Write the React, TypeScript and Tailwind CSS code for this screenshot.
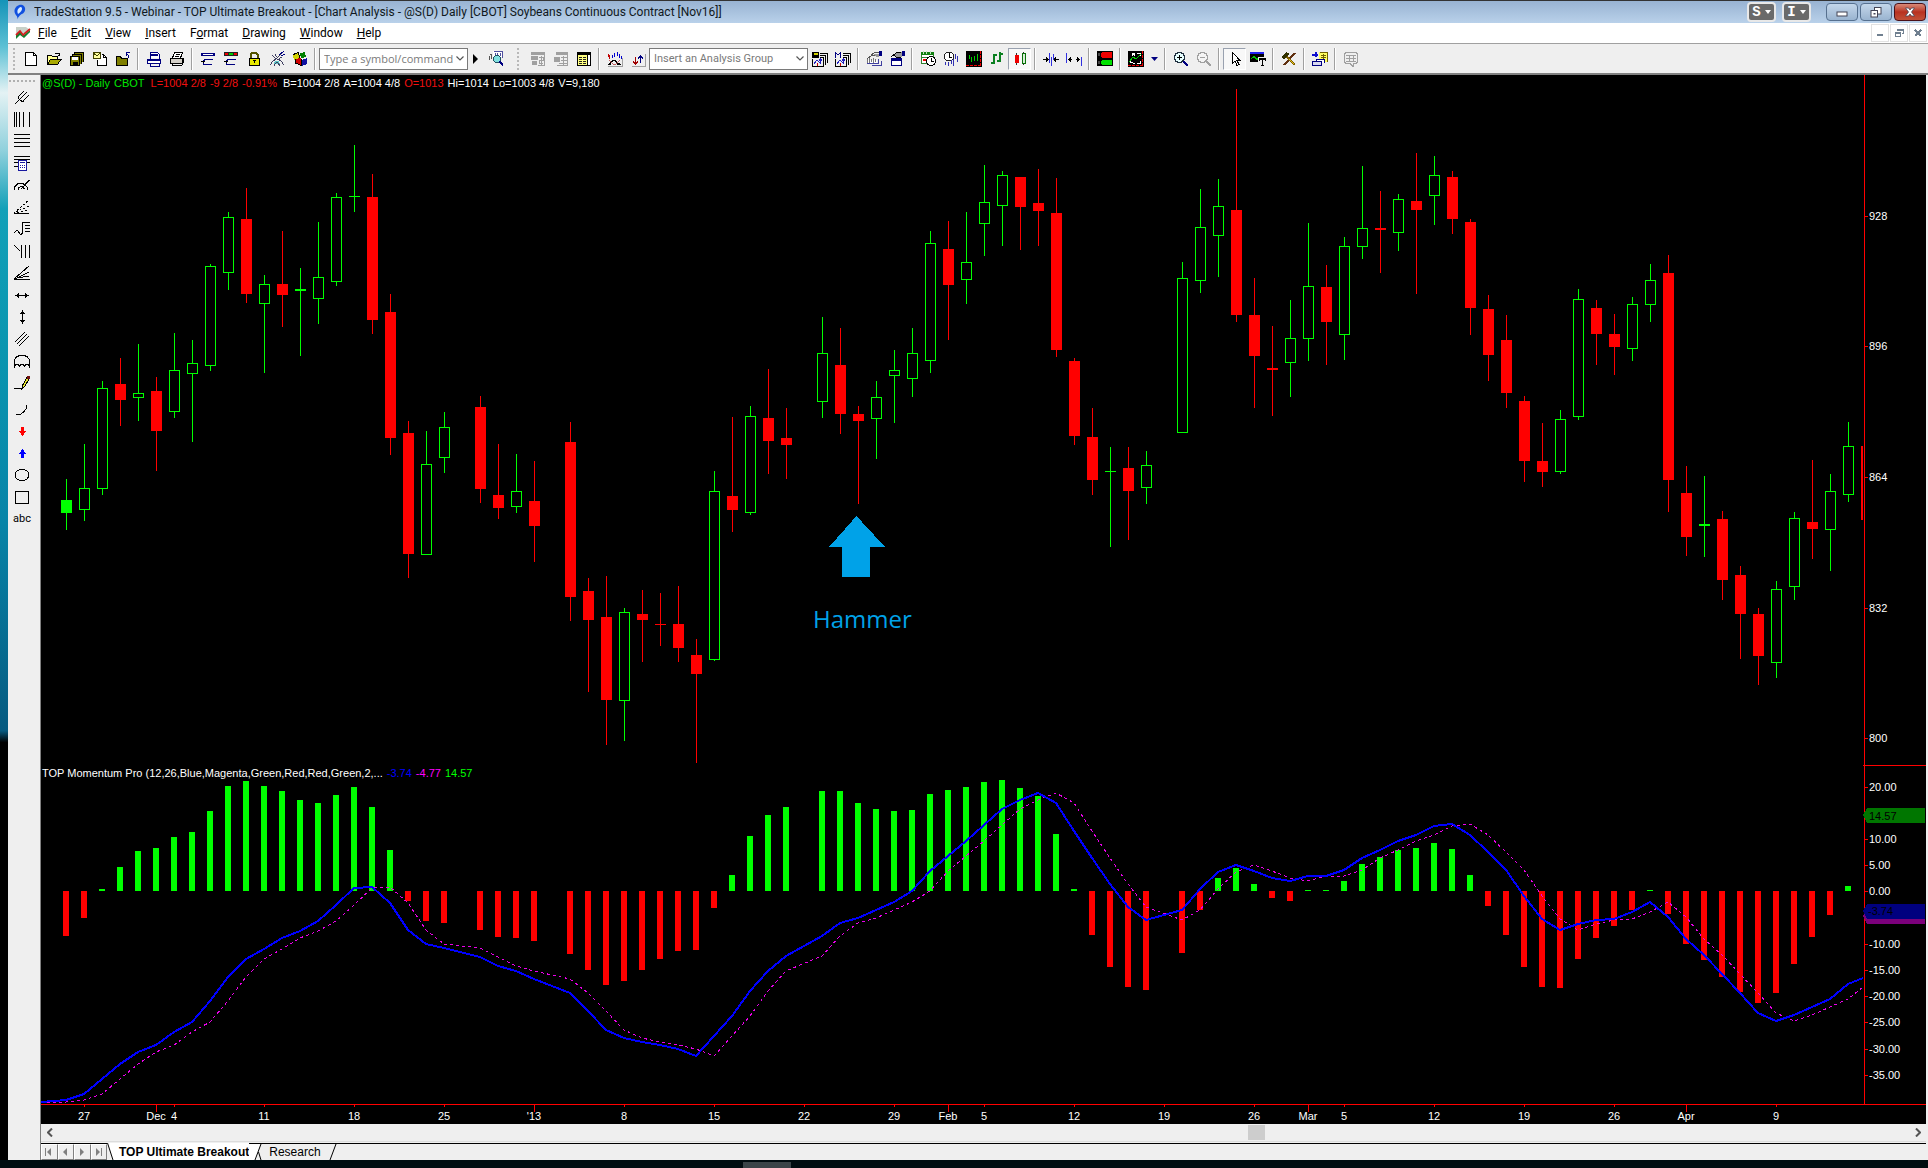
import React from "react";

type Kids = { children: React.ReactNode };

/* ---------- chart data: positions inside the 1885 x 1049 plot ---------- */

type Kind = "up" | "down" | "solid";
// [bar index, high, body top, body bottom, low, kind]
const candles: [number, number, number, number, number, Kind][] = [
  [0, 404, 425, 438, 455, "solid"], [1, 369, 413, 435, 446, "up"], [2, 306, 313, 414, 420, "up"],
  [3, 283, 309, 325, 351, "down"], [4, 269, 318, 323, 346, "up"], [5, 302, 316, 356, 396, "down"],
  [6, 258, 295, 337, 343, "up"], [7, 265, 288, 299, 367, "up"], [8, 189, 191, 291, 296, "up"],
  [9, 137, 142, 198, 215, "up"], [10, 113, 144, 219, 228, "down"], [11, 200, 209, 229, 298, "up"],
  [12, 156, 209, 220, 252, "down"], [13, 193, 214, 216, 281, "solid"], [14, 147, 202, 224, 249, "up"],
  [15, 118, 122, 207, 211, "up"], [16, 70, 121, 122, 137, "solid"], [17, 99, 122, 245, 259, "down"],
  [18, 219, 237, 363, 380, "down"], [19, 346, 358, 479, 503, "down"], [20, 356, 389, 480, 480, "up"],
  [21, 337, 352, 383, 398, "up"], [23, 321, 332, 414, 428, "down"], [24, 369, 420, 433, 444, "down"],
  [25, 379, 416, 432, 438, "up"], [26, 386, 426, 451, 487, "down"], [28, 347, 367, 522, 546, "down"],
  [29, 503, 516, 545, 617, "down"], [30, 501, 542, 625, 670, "down"], [31, 533, 537, 626, 666, "up"],
  [32, 515, 539, 545, 587, "down"], [33, 518, 549, 550, 571, "down"], [34, 511, 549, 573, 587, "down"],
  [35, 564, 580, 599, 688, "down"], [36, 396, 416, 585, 586, "up"], [37, 342, 421, 435, 457, "down"],
  [38, 331, 341, 438, 440, "up"], [39, 294, 343, 366, 399, "down"], [40, 333, 363, 370, 404, "down"],
  [42, 242, 278, 327, 343, "up"], [43, 253, 290, 339, 359, "down"], [44, 331, 339, 346, 429, "down"],
  [45, 306, 322, 344, 384, "up"], [46, 275, 295, 301, 348, "up"], [47, 253, 278, 304, 322, "up"],
  [48, 156, 168, 286, 298, "up"], [49, 146, 174, 210, 265, "down"], [50, 137, 187, 205, 229, "up"],
  [51, 90, 127, 149, 181, "up"], [52, 96, 100, 131, 171, "up"], [53, 102, 102, 132, 175, "down"],
  [54, 94, 128, 136, 171, "down"], [55, 103, 138, 275, 282, "down"], [56, 283, 286, 361, 370, "down"],
  [57, 333, 362, 405, 420, "down"], [58, 372, 396, 397, 472, "solid"], [59, 372, 393, 416, 465, "down"],
  [60, 376, 390, 413, 429, "up"], [62, 187, 203, 358, 358, "up"], [63, 114, 152, 206, 218, "up"],
  [64, 104, 131, 161, 202, "up"], [65, 14, 135, 240, 247, "down"], [66, 203, 240, 281, 333, "down"],
  [67, 251, 293, 295, 341, "down"], [68, 225, 263, 288, 322, "up"], [69, 148, 211, 264, 286, "up"],
  [70, 190, 212, 247, 290, "down"], [71, 162, 171, 260, 285, "up"], [72, 91, 153, 172, 184, "up"],
  [73, 116, 153, 155, 198, "down"], [74, 119, 124, 158, 176, "up"], [75, 78, 126, 135, 219, "down"],
  [76, 81, 100, 121, 150, "up"], [77, 96, 102, 144, 159, "down"], [78, 144, 147, 233, 260, "down"],
  [79, 220, 234, 280, 306, "down"], [80, 240, 265, 318, 333, "down"], [81, 321, 326, 386, 407, "down"],
  [82, 348, 386, 397, 412, "down"], [83, 335, 344, 397, 399, "up"], [84, 214, 224, 342, 345, "up"],
  [85, 225, 233, 259, 290, "down"], [86, 239, 259, 272, 300, "down"], [87, 222, 229, 274, 286, "up"],
  [88, 189, 205, 230, 247, "up"], [89, 180, 198, 405, 437, "down"], [90, 391, 418, 462, 481, "down"],
  [91, 401, 449, 451, 482, "solid"], [92, 436, 444, 505, 525, "down"], [93, 491, 500, 539, 584, "down"],
  [94, 533, 539, 581, 610, "down"], [95, 506, 514, 588, 603, "up"], [96, 437, 443, 512, 525, "up"],
  [97, 385, 447, 454, 484, "down"], [98, 399, 416, 455, 496, "up"], [99, 347, 371, 420, 427, "up"],
];

const histogram: [number, number][] = [
  [0, -45], [1, -27], [2, 2], [3, 24], [4, 40], [5, 43], [6, 54], [7, 59], [8, 80], [9, 105], [10, 110],
  [11, 105], [12, 100], [13, 91], [14, 88], [15, 96], [16, 104], [17, 84], [18, 41], [19, -10], [20, -30],
  [21, -32], [23, -39], [24, -46], [25, -47], [26, -50], [28, -63], [29, -79], [30, -94], [31, -90],
  [32, -79], [33, -68], [34, -60], [35, -59], [36, -17], [37, 16], [38, 55], [39, 76], [40, 84], [42, 100],
  [43, 100], [44, 88], [45, 82], [46, 80], [47, 81], [48, 97], [49, 101], [50, 104], [51, 109], [52, 111],
  [53, 103], [54, 95], [55, 57], [56, 2], [57, -44], [58, -76], [59, -96], [60, -99], [62, -62], [63, -19],
  [64, 13], [65, 23], [66, 7], [67, -7], [68, -10], [69, 1], [70, 1], [71, 10], [72, 27], [73, 34], [74, 41],
  [75, 43], [76, 48], [77, 42], [78, 16], [79, -15], [80, -44], [81, -76], [82, -96], [83, -97], [84, -68],
  [85, -47], [86, -35], [87, -19], [88, 1], [89, -23], [90, -53], [91, -69], [92, -86], [93, -101],
  [94, -112], [95, -102], [96, -73], [97, -46], [98, -24], [99, 5],
];

const momentum: [number, number][] = [
  [0, 1025], [1, 1019], [2, 1004], [3, 989], [4, 977], [5, 970], [6, 957], [7, 947], [8, 926], [9, 902],
  [10, 884], [11, 874], [12, 863], [13, 856], [14, 846], [15, 830], [16, 813], [17, 812], [18, 828],
  [19, 855], [20, 869], [21, 873], [23, 882], [24, 891], [25, 896], [26, 904], [28, 918], [29, 936],
  [30, 955], [31, 963], [32, 967], [33, 970], [34, 974], [35, 981], [36, 961], [37, 941], [38, 916],
  [39, 896], [40, 881], [42, 861], [43, 848], [44, 843], [45, 835], [46, 827], [47, 816], [48, 796],
  [49, 781], [50, 766], [51, 750], [52, 734], [53, 725], [54, 718], [55, 728], [56, 756], [57, 783],
  [58, 809], [59, 832], [60, 845], [62, 835], [63, 814], [64, 797], [65, 790], [66, 796], [67, 803],
  [68, 806], [69, 801], [70, 801], [71, 795], [72, 783], [73, 775], [74, 766], [75, 760], [76, 751],
  [77, 749], [78, 760], [79, 777], [80, 795], [81, 821], [82, 844], [83, 855], [84, 849], [85, 845],
  [86, 844], [87, 837], [88, 827], [89, 842], [90, 864], [91, 880], [92, 899], [93, 918], [94, 938],
  [95, 946], [96, 940], [97, 932], [98, 924], [99, 909],
];

const dates: [number, string, boolean][] = [
  [1, "27", false], [5, "Dec", true], [6, "4", false], [11, "11", false], [16, "18", false], [21, "25", false],
  [26, "'13", true], [31, "8", false], [36, "15", false], [41, "22", false], [46, "29", false], [49, "Feb", true],
  [51, "5", false], [56, "12", false], [61, "19", false], [66, "26", false], [69, "Mar", true], [71, "5", false],
  [76, "12", false], [81, "19", false], [86, "26", false], [90, "Apr", true], [95, "9", false],
];

const scale: [number, string][] = [
  [141, "928"], [271, "896"], [402, "864"], [533, "832"], [663, "800"],
  [712, "20.00"], [764, "10.00"], [790, "5.00"], [816, "0.00"], [869, "-10.00"], [895, "-15.00"],
  [921, "-20.00"], [947, "-25.00"], [974, "-30.00"], [1000, "-35.00"],
];

const barX = (i: number) => 25 + 18 * i;
const ZERO = 816;
const GREEN = "#00ff00";
const RED = "#ff0000";

function Chart() {
  const fast = [`0,1027`, ...momentum.map(([i, y]) => `${barX(i)},${y}`), `1822,903`].join(" ");
  const slow = [
    `0,1028`,
    `${barX(0)},1027`,
    ...momentum.slice(1).map(([i], k) => `${barX(i)},${momentum[k][1]}`),
    `1822,912`,
  ].join(" ");
  return (
    <div className="relative bg-black">
      <svg viewBox="0 0 1885 1049" className="block h-auto w-full" shapeRendering="crispEdges"
        fontFamily="'Liberation Sans', Arial, sans-serif" fontSize="11" role="img" aria-label="Soybeans daily candlestick chart with momentum">
        {candles.map(([i, high, top, bottom, low, kind]) => {
          const x = barX(i);
          const color = kind === "down" ? RED : GREEN;
          return (
            <g key={i} fill={color}>
              <rect x={x} y={high} width="1" height={top - high} />
              <rect x={x} y={bottom} width="1" height={low - bottom} />
              {kind === "up" ? (
                <rect x={x - 4.5} y={top + 0.5} width="10" height={bottom - top - 1} fill="none" stroke={color} />
              ) : (
                <rect x={x - 5} y={top} width="11" height={bottom - top} />
              )}
            </g>
          );
        })}
        <rect x="1820" y="371" width="2" height="74" fill={RED} />

        {histogram.map(([i, h]) => (
          <rect key={i} x={barX(i) - 3} y={h > 0 ? ZERO - h : ZERO} width="6" height={Math.abs(h)} fill={h > 0 ? GREEN : RED} />
        ))}
        <polyline points={slow} fill="none" stroke="#ea00ea" strokeWidth="1" strokeDasharray="3 3" />
        <polyline points={fast} fill="none" stroke="#0000ff" strokeWidth="2" />

        <path d="M815.5 441L844 472H829V502H801V472H788Z" fill="#00a2e8" />
        <text x="772" y="553" fontSize="24" fill="#00a2e8" fontFamily="'Open Sans', 'Noto Sans', sans-serif">Hammer</text>

        <g fill={RED}>
          <rect x="1823" y="0" width="1" height="1029" />
          <rect x="0" y="1029" width="1885" height="1" />
          <rect x="1822" y="690" width="63" height="1" />
          {scale.map(([y]) => <rect key={y} x="1824" y={y} width="3" height="1" />)}
          {dates.map(([i, , major]) => <rect key={i} x={barX(i)} y="1030" width="1" height={major ? 7 : 2} />)}
        </g>
        <g fill="#ffffff">
          {scale.map(([y, label]) => <text key={y} x="1828" y={y + 4}>{label}</text>)}
          {dates.map(([i, label]) => <text key={i} x={barX(i)} y="1045" textAnchor="middle">{label}</text>)}
        </g>
        <path d="M1822 740L1826 733H1884V748H1826Z" fill="#007600" />
        <path d="M1822 841L1826 834H1884V849H1826Z" fill="#7b007b" />
        <path d="M1822 836L1826 829H1884V844H1826Z" fill="#00007f" />
        <text x="1828" y="745" fill="#000000">14.57</text>
        <text x="1827" y="840" fill="#000000">-3.74</text>
      </svg>
      <p className="absolute left-px top-0 flex gap-1 whitespace-pre text-[11px] leading-4 text-white">
        <span className="text-[#00e600]">@S(D) - Daily</span>
        <span className="mr-0.5 text-[#00e600]">CBOT</span>
        <span className="text-[#f01010]">L=1004 2/8</span>
        <span className="text-[#f01010]">-9 2/8</span>
        <span className="mr-0.5 text-[#f01010]">-0.91%</span>
        <span>B=1004 2/8</span>
        <span>A=1004 4/8</span>
        <span className="text-[#f01010]">O=1013</span>
        <span>Hi=1014</span>
        <span>Lo=1003 4/8</span>
        <span>V=9,180</span>
      </p>
      <p className="absolute left-px top-[690px] flex gap-1 whitespace-pre text-[11px] leading-4 text-white">
        <span>TOP Momentum Pro (12,26,Blue,Magenta,Green,Red,Red,Green,2,...</span>
        <span className="text-[#0000ff]">-3.74</span>
        <span className="text-[#ff00ff]">-4.77</span>
        <span className="text-[#00ff00]">14.57</span>
      </p>
    </div>
  );
}

/* ---------- icons, all on a 16 x 16 grid ---------- */

const L = ({ d, c = "#000", w = 1 }: { d: string; c?: string; w?: number }) => <path d={d} fill="none" stroke={c} strokeWidth={w} />;
const F = ({ d, c = "#000" }: { d: string; c?: string }) => <path d={d} fill={c} />;
const Icon = ({ children }: Kids) => (
  <svg viewBox="0 0 16 16" className="block h-4 w-4 shrink-0" shapeRendering="crispEdges" aria-hidden="true">{children}</svg>
);

const NAVY = "#000080";
const GRAY = "#a0a0a0";

const ic = {
  blank: <><F d="M2 1H10L14 5V15H2Z" c="#fff" /><L d="M2.5 1.5H10.5L13.5 4.5V14.5H2.5ZM10.5 1.5V4.5H13.5" /></>,
  open: <><F d="M1 4H5L6 5H11V8H15L11 14H1Z" c="#a8a800" /><F d="M2 5H5L6 6H11V8H4L2 12Z" c="#ffff90" /><L d="M1.5 13.5V4.5H5L6.5 5.5H11.5V8M1.5 13.5L4.5 8.5H15L11.5 13.5ZM9 2.5H13V5M12 4.5H14" /></>,
  saveAll: <><F d="M5 1H15V11H13V13H11V15H1V5H3V3H5Z" c="#808000" /><L d="M5.5 3V1.5H14.5V11M3.5 5V3.5H12.5V13M1.5 5.5H10.5V14.5H1.5Z" /><F d="M3 6H9V9H3Z" c="#fff" /><F d="M4 11H9V14H4Z" /></>,
  mailDoc: <><F d="M5 4H13L15 7V15H5Z" c="#fff" /><L d="M5.5 9V14.5H14.5V6.5L11.5 3.5H10M11.5 4V6.5H14" /><F d="M1 1H9V8H1Z" c="#ffffa0" /><L d="M1.5 1.5H8.5V7.5H1.5ZM1.5 2L5 5L8.5 2" c="#404000" /></>,
  folderUp: <><F d="M1 5H6L7 7H13V15H1Z" c="#808000" /><L d="M1.5 14.5V5.5H5.5L6.5 7.5H12.5V14.5Z" /><L d="M13.500 7V4.500L11.500 2.500M11.500 5V1.500H15" c={NAVY} /></>,
  preview: <><F d="M4 1H13V7H4ZM2 9H14V13H2Z" c="#fff" /><L d="M4.5 8V1.500H11.500L13.500 3.500V8M1.500 8.500H14.500V12.500H1.500ZM4.500 12V15.500H13.500V12" c={NAVY} /><F d="M4 3H12V5H4ZM2 8H14V10H2Z" c={NAVY} /></>,
  print: <><F d="M2 7H14V13H2Z" c="#d4d0c8" /><F d="M5 1H13L11 7H3Z" c="#fff" /><L d="M5.500 1.500H13.500L11.500 7M5.500 1.500L3.500 7M6.500 3.500H11M5.500 5.500H10M1.500 7.500H13.500V12.500H1.500ZM3.500 12.500V14.500H12.500L14.500 11.500V6.500" /></>,
  rowsA: <><F d="M1 2H15V5H1Z" c={NAVY} /><F d="M3 3H13V4H3Z" c="#fff" /><L d="M13 8.500H5L3.500 10V13.500H12" c={NAVY} w={1.500} /><F d="M1 10H5V11H4V12H3V11H1Z" /></>,
  rowsB: <><F d="M1 1H15V5H1Z" c="#222" /><F d="M2 2H5V4H2Z" c="#e00" /><F d="M6 2H10V4H6Z" c="#0c0" /><F d="M11 2H14V4H11Z" c="#e00" /><L d="M13 8.500H5L3.500 10V13.500H12" c={NAVY} w={1.500} /><F d="M1 10H5V11H4V12H3V11H1Z" /></>,
  lock: <><L d="M4.500 7V3.500L6.500 1.500H9.500L11.500 3.500V7" w={2} c="#555500" /><F d="M3 7H14V15H3Z" c="#e8e800" /><L d="M3.500 7.500H13.500V14.500H3.500ZM8.500 9V12M7 9.500H10" /></>,
  dish: <><F d="M6 10H10L11 13H5Z" c="#60c8c8" /><L d="M6 9L14 1M8 9L13 6M3.500 4.500L7 8M6 3.500L8 6M1.500 14.500L3 11L6 8.500M10 8.500L13 11L14.500 14.500M5 14.500L8 11L11 14.500" c="#404060" /><L d="M10 4L15 0M12 5L16 3" c={NAVY} /></>,
  cubes: <><F d="M1 4L6 1L7 7L2 9Z" c="#d0d000" /><F d="M8 2L13 1L14 6L9 7Z" c="#008000" /><F d="M3 8L9 7V14L4 12Z" c="#d00000" /><F d="M9 9L15 7V13L10 15Z" c="#1010a0" /><L d="M1.500 3.500L6 1.500L8 7M3.500 8V12L9 14.500V8" /></>,
  lookup: <><L d="M1.500 5V9M3.500 4V8M1.500 3.500H4" c="#555" /><F d="M5 0H15V6H5Z" c="#fff" /><L d="M5.500 0.500H14.500V7M7.500 2V5M9.500 2V4M12.500 2V5" c="#5050a0" /><circle cx="9" cy="8" r="3.500" fill="#80e0e0" stroke="#205060" /><L d="M11.500 10.500L15 14.500" w={2} c={NAVY} /></>,
  gridA: <><F d="M1 1H15V4H1ZM1 5H8V9H1ZM2 10H7V14H2Z" c={GRAY} /><L d="M14.500 4V14.500H8M9 6.500H13V9.500H9V12.500H13M11 5V14" c={GRAY} /></>,
  gridB: <><F d="M3 1H15V4H3ZM1 6H7V11H1Z" c={GRAY} /><L d="M14.500 4V14.500H4M8 6.500H14M8 9.500H14M6 12.500H14M10.500 5V14" c={GRAY} /></>,
  grid: <><F d="M1 2H15V15H1Z" c="#ffff80" /><F d="M12 4H14V14H12Z" c="#fff" /><F d="M1 1H15V4H1Z" /><L d="M1.500 3V14.500H14.500V3M11.500 4V14" /><path d="M3 6.500H10M3 8.500H10M3 10.500H10M3 12.500H10" fill="none" stroke="#222" strokeDasharray="3 1" /></>,
  indicator: <><L d="M1.500 3V6M2.500 4V8" c="#c00000" /><L d="M5.500 4V7M7.500 2V6M10.500 1V5M12.500 3V7M14.500 5V8" c="#0000d0" /><L d="M1 13.500L3 13L6 9.500L8 9.500L11 13L14 13.500" c="#000" w={1.500} /><L d="M2 9L6 13L9 13L13 9" c="#c06060" /><L d="M15.500 7V15.500H1" c={GRAY} /></>,
  swap: <><L d="M5.500 6V13M3 10.500L5.500 13L8 10.500" c="#a00000" /><L d="M10.500 12V4M8 7.500L10.500 5L13 7.500" c={NAVY} /><L d="M15.500 3V15.500H2" c={GRAY} /></>,
  groupA: <><F d="M0 1H7V7H0Z" /><F d="M2 2H6V4H2Z" c="#d0d000" /><L d="M8 2.500H15.500V12M8 4.500H13.500V14M0.500 8V15.500H11.500V6.500H8" /><L d="M2 13L5 9L8 12M8.500 13V8M7 9.500L8.500 8L10 9.500" c="#2020c0" /><L d="M5.500 12V15" c="#c00" /></>,
  groupB: <><L d="M0.500 7V1.500L3 4L5.500 1.500V7" c={NAVY} /><L d="M8 2.500H15.500V12M8 4.500H13.500V14M0.500 8V15.500H11.500V6.500H8" /><L d="M2 13L5 9L8 12M8.500 13V8M7 9.500L8.500 8L10 9.500" c="#2020c0" /><L d="M5.500 12V15" c="#c00" /></>,
  editA: <><F d="M1 9H11V12H1Z" c="#fff" /><L d="M1 8L6 4H9M5 4L9 1.500H13" c="#555" /><F d="M7 3H13V6H10Z" c="#999" /><F d="M13 0H16V5H13Z" c={NAVY} /><L d="M1.500 8V12M3.500 7V12M5.500 8V11M7.500 7V12M9.500 8V11" c="#777" /><L d="M1 12.500H12.500V8M6 14.500H15.500V10" c="#4040a0" /></>,
  editB: <><F d="M2 8H13V15H2Z" c="#fff" /><L d="M2.500 7.500H12.500V14.500H2.500Z" c={NAVY} /><F d="M2 7H13V10H2Z" c={NAVY} /><F d="M5 3L9 1H13V6H7L4 5Z" c="#999" /><L d="M2 6L8 1.500H12M5 4.500L8 6.500H12" /><F d="M13 0H16V5H13Z" c={NAVY} /></>,
  calendar: <><F d="M1 2H14V13H1Z" c="#fff" /><F d="M1 1H14V4H1Z" c="#108010" /><L d="M3.500 0V3M6.500 0V3M10.500 0V3" c="#c0e0c0" /><L d="M1.500 4V12.500H7M13.500 4V6M2 6.500H12" c="#308030" /><F d="M3 8H6V10H3Z" c="#e00" /><circle cx="11" cy="10" r="4.500" fill="#fff" stroke="#000" /><L d="M11.500 7V10.500H14" /></>,
  clock: <><circle cx="6" cy="5.500" r="4.500" fill="#fff" stroke="#222" /><L d="M6.500 2V6H9" /><L d="M2.500 11V14M5.500 11V15M8.500 9V13M10.500 8V15M12.500 3V8M14.500 5V11" c="#3030b0" /></>,
  barsBox: <><F d="M0 0H16V16H0Z" /><L d="M3.500 4V8M5.500 6V11M8.500 5V10M11.500 3V10" c="#00d000" /><path d="M0 14.500H16M14.500 0V16" fill="none" stroke="#f00000" strokeDasharray="3 1" /></>,
  bars: <><L d="M5 3V13M2 12H5M5 3.500H8M11 1V11M8 10H11M11 3H14" c="#0a8020" w={2} /></>,
  candle: <><L d="M4.500 2V14M11.500 1V14" c="#333" /><F d="M3 4H7V12H3Z" c="#f00000" /><rect x="10.500" y="2.500" width="3" height="10" fill="#d8f0d8" stroke="#087008" /></>,
  squeeze: <><L d="M0 8.500H5M3 6.500L5 8.500L3 10.500M16 8.500H11M13 6.500L11 8.500L13 10.500" /><L d="M6.500 2V12M8.500 6V15M10.500 3V9" c="#3030e0" /></>,
  stretch: <><L d="M0.500 2V12M15.500 6V15" c="#3030e0" /><L d="M3 8.500H6M10 8.500H13M5 6.500L3 8.500L5 10.500M11 6.500L13 8.500L11 10.500" /></>,
  matrix: <><F d="M0 0H16V15H0Z" /><F d="M4 2L6 1H15V7H6L4 6Z" c="#f00000" /><F d="M4 10L6 9H15V14H6L4 13Z" c="#00e000" /><F d="M1 2H3V5H1ZM1 10H3V13H1Z" c="#444" /></>,
  expand: <><F d="M0 0H16V16H0Z" /><L d="M4 5V2.500H7M5 2L7 5M9 2.500H12V5M2.500 8V11H5M9 12.500H12V10M5 12.500H7" c="#fff" /><L d="M1 11L5 6L8 8L13 3" c="#00d000" /><path d="M0 14.500H16M14.500 0V16" fill="none" stroke="#f00000" strokeDasharray="3 1" /></>,
  zoomIn: <><circle cx="6.500" cy="6.500" r="5" fill="#e8ffff" stroke="#203040" strokeWidth="1.500" /><L d="M4 6.500H9M6.500 4V9" w={1.500} /><L d="M10.500 10.500L15 15" w={2.500} c={NAVY} /></>,
  zoomOut: <><circle cx="6.500" cy="6.500" r="5" fill="#f4f4f4" stroke={GRAY} strokeWidth="1.500" /><L d="M4 6.500H9" w={1.500} c={GRAY} /><L d="M10.500 10.500L15 15" w={2.500} c={GRAY} /></>,
  cursor: <><path d="M5.500 1.500V12.500L8 10L10 14.500L12 13.500L10 9.500H13Z" fill="#fff" stroke="#000" /></>,
  chartText: <><F d="M0 1H14V11H0Z" /><F d="M0 1H14V3H0Z" c="#2020f0" /><L d="M1 8L4 5.500L7 8.500L9 6" c="#00c000" /><F d="M8 6H16V15H8Z" c="#efefef" /><F d="M9 7H16V10H15V9H13V14H14V15H11V14H12V9H10V10H9Z" /></>,
  tools: <><L d="M3 14L14 2" w={2} c="#603010" /><L d="M6 6L14 14" w={2} c="#806000" /><F d="M1 5L5 1L9 3L5 6L4 8L2 8Z" c="#303000" /><L d="M8 8L13 13" c="#e0c020" /></>,
  addSheet: <><L d="M0 3.500H6M3.500 1V6" w={2} c="#1010d0" /><F d="M7 1H15V11H7Z" c="#ffff60" /><L d="M7.500 1.500H15.500V11M9 4.500H14M9 6.500H14M11.500 3V8" c="#706000" /><F d="M4 9H12V12H4Z" c="#fff" /><L d="M4.500 12V8.500H12.500V12M0.500 10.500H9.500V14.500H0.500Z" c={NAVY} /><F d="M1 11H9V14H1Z" c="#d8d8f0" /></>,
  note: <><path d="M2.500 1.500H13.500L14.500 3V11L12.500 12.500H11L10 15L7 12.500H3.500L1.500 11V3Z" fill="#efefef" stroke={GRAY} strokeWidth="1.500" /><L d="M3 4.500H13M3 7.500H13M3 10.500H13M6.500 4V11M10 4V11" c={GRAY} /></>,
};

const drawing: [string, React.ReactNode][] = [
  ["Pitchfork", <L d="M1 15L8 8M4 8L10 2M9 12L15 6M4 7.500V9L8 12.500H10M8 8L13 3" />],
  ["Time cycles", <L d="M0.500 1V16M2.500 1V16M5.500 1V16M9.500 1V16M15.500 1V16" />],
  ["Price levels", <L d="M0 1.500H16M0 5.500H16M0 9.500H16M0 13.500H16" />],
  ["Calculator", <><L d="M0 1.500H16M0 4.500H16M0 7.500H16M0 11.500H5" /><rect x="4.500" y="5.500" width="8" height="10" fill="#fff" stroke="#1818a0" /><F d="M6 7H11V8H6ZM6 10H7V11H6ZM8 10H9V11H8ZM10 10H11V11H10ZM6 12H7V13H6ZM8 12H9V13H8ZM10 12H11V13H10Z" c="#1818a0" /></>],
  ["Speed arcs", <L d="M0.500 13V10L4 6.500H9L13 10V13M4.500 13V11L6.500 9.500H8L10.500 12M7 12L15.500 3" />],
  ["Fan dotted", <><L d="M0 14.500H15" /><path d="M0 14L15 1M2 13L15 7M3 13.500L15 11" stroke="#000" strokeDasharray="2 2" fill="none" /></>],
  ["Retracement", <L d="M0 12L3 9L7 14L8.500 12V1M9 1.500H16M11 4.500H16M11 7.500H16M11 10.500H16" />],
  ["Time zones", <L d="M0 2L6 8M7.500 2V15M11.500 2V15M15.500 2V15" />],
  ["Speed fan", <L d="M0 14.500H16M0 14L15 1M1 14L15 7M3 13L15 11" />],
  ["Horizontal line", <><L d="M1 8.500H15" /><F d="M1 8.500L5 6V11ZM15 8.500L11 6V11Z" /></>],
  ["Vertical line", <><L d="M8.500 1V15" /><F d="M8.500 1L6 5H11ZM8.500 15L6 11H11Z" /></>],
  ["Parallel lines", <L d="M1 11L11 1M3 13L13 3M5 15L15 5" />],
  ["Arch", <L d="M0.500 15V8C1 4 4 2.500 8 2.500S15 4 15.500 8V15M0.500 14C1 10 5 10 5.500 14C6 10 10 10 10.500 14C11 10 15 10 15.500 14" />],
  ["Pencil", <><L d="M0 13.500H8" /><F d="M8 13L9 9L13 2L15 4L11 11Z" c="#e8e830" /><L d="M8 13.500L9 9.500L13 2.500L15 4L11 11Z" /><F d="M13 1H16V4H13Z" c="#701010" /></>],
];
const drawing2: [string, React.ReactNode][] = [
  ["Arc", <L d="M2 13.500H6L9 11.500L12 8V4" />],
  ["Down arrow", <F d="M7 4H10V8H12L8.500 13L5 8H7Z" c="#ff0000" />],
  ["Up arrow", <F d="M7 13H10V9H12L8.500 4L5 9H7Z" c="#0000ff" />],
  ["Ellipse", <ellipse cx="8" cy="8" rx="7" ry="5.500" fill="none" stroke="#000" />],
  ["Rectangle", <L d="M1.500 2.500H14.500V14.500H1.500Z" />],
];

/* ---------- toolbar pieces ---------- */

const Tool = ({ label, active, children }: Kids & { label: string; active?: boolean }) => (
  <button type="button" aria-label={label}
    className={active ? "flex h-[22px] w-[23px] shrink-0 items-center justify-center border border-gray-400 border-r-white border-b-white bg-[#f8f8f8]" : "flex h-[22px] w-[23px] shrink-0 items-center justify-center"}>
    <Icon>{children}</Icon>
  </button>
);
const Sep = () => <div className="mx-[3px] h-[22px] w-0.5 shrink-0 border-l border-[#a0a0a0] bg-white" />;
const Grip = () => <div className="h-[22px] w-0 shrink-0 border-l-2 border-dotted border-[#b8b8b8]" />;

function Combo({ label, className }: { label: string; className: string }) {
  return (
    <div className={className}>
      <select aria-label={label} className="h-full w-full appearance-none border border-[#7a7a7a] bg-white pl-1 leading-4 text-[#7a7a7a] outline-none">
        <option>{label}</option>
      </select>
      <svg viewBox="0 0 8 5" className="pointer-events-none absolute right-1 top-2 h-[5px] w-2" aria-hidden="true">
        <path d="M0.500 0.500L4 4L7.500 0.500" fill="none" stroke="#555" strokeWidth="1.200" />
      </svg>
    </div>
  );
}

const menus: [string, string, string][] = [
  ["", "F", "ile"], ["", "E", "dit"], ["", "V", "iew"], ["", "I", "nsert"], ["F", "o", "rmat"], ["", "D", "rawing"], ["", "W", "indow"], ["", "H", "elp"],
];

function TitleBar() {
  const glass = "flex h-[18px] w-8 items-center justify-center rounded-sm border border-[#56708f] bg-linear-to-b from-[#c3d6ea] to-[#9ab4d0]";
  const dark = "flex h-5 w-[29px] items-center justify-center gap-1 rounded-sm border-2 border-[#e8e8e8] bg-[#6a6a6a] font-mono text-sm font-bold leading-none text-white";
  return (
    <header className="flex h-[23px] items-center border-t border-[#333] bg-linear-to-b from-[#98b3d2] to-[#b9d1ea] pl-0.5 pr-0.5">
      <svg viewBox="0 0 16 16" className="ml-0.5 h-4 w-4" aria-hidden="true">
        <path d="M5 15.500C7 12 2 11 2.500 6.500C3 2.500 7 0 10.500 1C14 2.500 14 7.500 11 9.500C8.500 10.500 7 12 5 15.500Z" fill="#1050e0" />
        <path d="M6 10C4.500 7 6 3.500 9 3C11 4 10 7.500 6 10Z" fill="#d8ecff" />
      </svg>
      <h1 className="ml-1.5 grow truncate font-[Roboto] text-[12px] font-normal leading-5 text-[#101820]">TradeStation 9.5 - Webinar - TOP Ultimate Breakout - [Chart Analysis - @S(D) Daily [CBOT] Soybeans Continuous Contract [Nov16]]</h1>
      <div className="flex items-center gap-1.5 pr-[15px]">
        {["S", "I"].map((t) => (
          <button key={t} type="button" className={dark}>
            {t}<svg viewBox="0 0 6 4" className="h-1 w-1.5" aria-hidden="true"><path d="M0 0H6L3 4Z" fill="#fff" /></svg>
          </button>
        ))}
      </div>
      <div className="flex items-center gap-0.5">
        <button type="button" aria-label="Minimize" className={glass}>
          <svg viewBox="0 0 12 12" className="h-3 w-3"><rect x="1" y="6" width="10" height="4" fill="#fff" stroke="#445" /></svg>
        </button>
        <button type="button" aria-label="Restore" className={glass}>
          <svg viewBox="0 0 12 12" className="h-3 w-3"><rect x="4.500" y="1.500" width="6.500" height="6.500" fill="#fff" stroke="#445" /><rect x="1" y="4.500" width="6.500" height="6.500" fill="#fff" stroke="#445" /><rect x="3.500" y="7" width="2" height="1.500" fill="#445" /></svg>
        </button>
        <button type="button" aria-label="Close" className="flex h-[18px] w-8 items-center justify-center rounded-sm border border-[#4a1018] bg-linear-to-b from-[#d88878] via-[#b83020] to-[#c05038]">
          <svg viewBox="0 0 12 12" className="h-3 w-3"><path d="M1.500 2H4.500L6 4L7.500 2H10.500L7.500 6L10.500 10H7.500L6 8L4.500 10H1.500L4.500 6Z" fill="#fff" stroke="#445" strokeWidth="0.800" /></svg>
        </button>
      </div>
    </header>
  );
}

function MenuBar() {
  const mdi = "flex h-[18px] w-[18px] items-center justify-center border border-[#e2e2e2]";
  return (
    <nav className="flex h-[21px] items-center border-b border-[#a0a0a0] bg-white pl-[7px] pr-px">
      <svg viewBox="0 0 16 14" className="h-3.5 w-4" aria-hidden="true">
        <path d="M1 1H11L15 4V7H1Z" fill="#c8d0c8" /><path d="M1 13V9L5 5L9 9L15 4V6L9 12L5 9Z" fill="#108030" /><path d="M1 9L5 5L8 9L15 3" fill="none" stroke="#d02020" strokeWidth="1.800" />
      </svg>
      <div className="ml-[7px] flex gap-3.5 font-[Roboto] text-[12px] leading-4 text-black">
        {menus.map(([a, u, b]) => <button key={u + b} type="button">{a}<span className="underline">{u}</span>{b}</button>)}
      </div>
      <div className="ml-auto flex gap-px">
        <button type="button" aria-label="Minimize chart" className={mdi}><Icon><F d="M5 9H11V11H5Z" c="#708090" /></Icon></button>
        <button type="button" aria-label="Restore chart" className={mdi}><Icon><L d="M6.500 6V4.500H12.500V8.500H11M4.500 7.500H9.500V11.500H4.500Z" c="#708090" /><F d="M6 4H13V6H6ZM4 7H10V9H4Z" c="#708090" /></Icon></button>
        <button type="button" aria-label="Close chart" className={mdi}><Icon><L d="M5 5L11 11M11 5L5 11" c="#708090" w={2} /></Icon></button>
      </div>
    </nav>
  );
}

function ToolBar() {
  return (
    <div className="flex h-[31px] items-center border-b-2 border-[#808080] bg-[#efefef] pl-[5px]">
      <Grip />
      <div className="w-1 shrink-0" />
      <Tool label="New">{ic.blank}</Tool><Tool label="Open">{ic.open}</Tool><Tool label="Save all">{ic.saveAll}</Tool><Tool label="New message">{ic.mailDoc}</Tool><Tool label="Close workspace">{ic.folderUp}</Tool>
      <Sep />
      <Tool label="Preview">{ic.preview}</Tool><Tool label="Print">{ic.print}</Tool>
      <Sep />
      <Tool label="Status rows">{ic.rowsA}</Tool><Tool label="Color rows">{ic.rowsB}</Tool><Tool label="Lock">{ic.lock}</Tool><Tool label="Data network">{ic.dish}</Tool><Tool label="Blocks">{ic.cubes}</Tool>
      <Sep />
      <Combo label="Type a symbol/command" className="relative h-[22px] w-[149px] shrink-0 text-[11px]" />
      <button type="button" aria-label="Go" className="flex w-3.5 shrink-0 justify-center"><svg viewBox="0 0 5 10" className="h-2.5 w-[5px]"><path d="M0 0L5 5L0 10Z" /></svg></button>
      <div className="flex w-7 shrink-0 justify-center"><Tool label="Symbol lookup">{ic.lookup}</Tool></div>
      <div className="flex w-4 shrink-0 justify-center"><Grip /></div>
      <Tool label="Account grid">{ic.gridA}</Tool><Tool label="Order grid">{ic.gridB}</Tool><Tool label="Data window">{ic.grid}</Tool>
      <Sep />
      <Tool label="Insert indicator">{ic.indicator}</Tool><Tool label="Insert strategy">{ic.swap}</Tool>
      <Combo label="Insert an Analysis Group" className="relative h-[22px] w-[159px] shrink-0 font-[Roboto] text-[11px]" />
      <Tool label="Save group">{ic.groupA}</Tool><Tool label="Manage groups">{ic.groupB}</Tool>
      <Sep />
      <Tool label="Format analysis">{ic.editA}</Tool><Tool label="Format window">{ic.editB}</Tool>
      <Sep />
      <Tool label="Calendar">{ic.calendar}</Tool><Tool label="Interval">{ic.clock}</Tool><Tool label="Bar box">{ic.barsBox}</Tool><Tool label="Bars">{ic.bars}</Tool><Tool label="Candlesticks" active>{ic.candle}</Tool>
      <Sep />
      <Tool label="Decrease spacing">{ic.squeeze}</Tool><Tool label="Increase spacing">{ic.stretch}</Tool>
      <Sep />
      <Tool label="Matrix">{ic.matrix}</Tool>
      <Sep />
      <Tool label="Expand">{ic.expand}</Tool>
      <button type="button" aria-label="Expand options" className="flex w-3.5 shrink-0 justify-center"><svg viewBox="0 0 7 4" className="h-1 w-[7px]"><path d="M0 0H7L3.500 4Z" fill={NAVY} /></svg></button>
      <Sep />
      <Tool label="Zoom in">{ic.zoomIn}</Tool><Tool label="Zoom out">{ic.zoomOut}</Tool>
      <Sep />
      <Tool label="Pointer" active>{ic.cursor}</Tool><Tool label="Text">{ic.chartText}</Tool>
      <Sep />
      <Tool label="Build">{ic.tools}</Tool>
      <Sep />
      <Tool label="Add sheet">{ic.addSheet}</Tool>
      <Sep />
      <Tool label="Notes">{ic.note}</Tool>
    </div>
  );
}

function DrawingBar() {
  const cell = "flex h-[22px] w-full items-center justify-center";
  return (
    <aside className="flex w-8 shrink-0 flex-col items-center bg-[#efefef] pr-1">
      <div className="mb-1 mt-[5px] h-0.5 w-[26px] border-t-2 border-dotted border-[#b0b0b0]" />
      {drawing.map(([name, art]) => <button key={name} type="button" aria-label={name} className={cell}><Icon>{art}</Icon></button>)}
      <div className="mt-1 w-full">
        {drawing2.map(([name, art]) => <button key={name} type="button" aria-label={name} className={cell}><Icon>{art}</Icon></button>)}
        <button type="button" className="block h-[22px] w-full text-center font-[Roboto] text-[11px] leading-5 text-black">abc</button>
      </div>
    </aside>
  );
}

const navShapes: [string, string][] = [
  ["First", "M3 3H4V11H3ZM9 3V11L5 7Z"], ["Previous", "M8 3V11L4 7Z"], ["Next", "M5 3V11L9 7Z"], ["Last", "M4 3V11L8 7ZM9 3H10V11H9Z"],
];

function Footer() {
  return (
    <footer>
      <div className="flex h-[18px] items-center border-b border-[#dcdcdc] bg-[#efefef]">
        <button type="button" aria-label="Scroll left" className="flex w-[17px] justify-center"><svg viewBox="0 0 6 9" className="h-[9px] w-1.5"><path d="M5 0.500L1 4.500L5 8.500" fill="none" stroke="#555" strokeWidth="2" /></svg></button>
        <div className="grow-[1190]" />
        <div className="h-[15px] w-[17px] bg-[#cdcdcd]" />
        <div className="grow-[644]" />
        <button type="button" aria-label="Scroll right" className="flex w-[17px] justify-center"><svg viewBox="0 0 6 9" className="h-[9px] w-1.5"><path d="M1 0.500L5 4.500L1 8.500" fill="none" stroke="#555" strokeWidth="2" /></svg></button>
      </div>
      <div className="mt-px flex h-[17px] items-stretch border-t border-black bg-[#efefef]">
        <div className="flex w-[66px]">
          {navShapes.map(([name, d]) => (
            <button key={name} type="button" aria-label={name} className="grow border border-white border-b-[#808080] border-r-[#808080]">
              <svg viewBox="0 0 14 14" className="mx-auto block h-3.5 w-3.5"><path d={d} fill="#808080" /></svg>
            </button>
          ))}
        </div>
        <button type="button" className="-mt-px flex items-center bg-white text-[12px] font-bold leading-4 text-black">
          <svg viewBox="0 0 12 17" className="h-[17px] w-3"><path d="M0 0H1L6 17H0Z" fill="#efefef" /><path d="M0.500 0L6 17" fill="none" stroke="#000" /></svg>
          TOP Ultimate Breakout
        </button>
        <button type="button" className="flex items-center text-[12px] leading-4 text-black">
          <svg viewBox="0 0 20 16" className="h-4 w-5"><path d="M0 0H11L7 16H0Z" fill="#fff" /><path d="M12 0L6 16M9.500 8L12 16" fill="none" stroke="#000" /></svg>
          Research
          <svg viewBox="0 0 16 16" className="h-4 w-4"><path d="M15 0L9 16" fill="none" stroke="#000" /></svg>
        </button>
      </div>
    </footer>
  );
}

export default function App() {
  return (
    <div className="flex min-h-screen flex-col bg-[#000c10] font-['Open_Sans','Noto_Sans',sans-serif]">
      <div className="flex">
        <div className="w-2 shrink-0 bg-[linear-gradient(to_bottom,#1593b8_0%,#5cc0d4_4%,#e4f2f4_8%,#8fd0dc_13%,#12a0b8_18%,#0a96b0_30%,#0784a8_45%,#065a80_63%,#000_64%)]" />
        <div className="min-w-0 grow bg-[#efefef]">
          <TitleBar />
          <MenuBar />
          <ToolBar />
          <div className="flex">
            <DrawingBar />
            <main className="min-w-0 grow border-l border-[#808080] pr-0.5 font-['Liberation_Sans',Arial,sans-serif]">
              <Chart />
              <Footer />
            </main>
          </div>
        </div>
      </div>
      <div className="mt-auto flex h-1.5 justify-start pl-[743px]"><div className="w-12 bg-[#3a4448]" /></div>
    </div>
  );
}
